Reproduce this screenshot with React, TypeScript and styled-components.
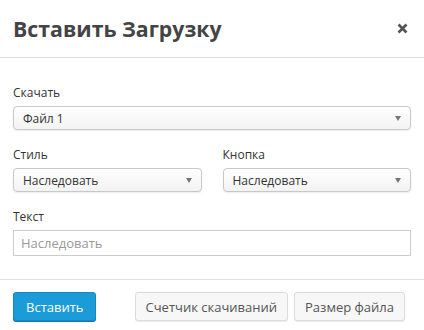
import { FC } from "react";
import styled, { createGlobalStyle } from "styled-components";

const GlobalStyle = createGlobalStyle`
  html, body {
    margin: 0;
    padding: 0;
    background: #fff;
    font-family: "Open Sans", "Liberation Sans", sans-serif;
  }
`;

const SModal = styled.div`
  width: 424px;
  height: 330px;
  background: #fff;
  overflow: hidden;
`;

const SHeader = styled.header`
  display: flex;
  align-items: center;
  justify-content: space-between;
  height: 57px;
  padding: 0 15px 0 13px;
  border-bottom: 1px solid #ddd;
`;

const STitle = styled.h1`
  margin: 0;
  font-size: 21.3px;
  font-weight: 700;
  color: #444;
`;

const SClose = styled.button`
  display: flex;
  align-items: center;
  justify-content: center;
  width: 14px;
  height: 16px;
  padding: 0;
  border: none;
  background: none;
  cursor: pointer;
`;

const SBody = styled.div`
  display: grid;
  gap: 16px;
  padding: 26px 13px 23px;
  border-bottom: 1px solid #e2e2e2;
`;

const SRow = styled.div`
  display: grid;
  grid-template-columns: 1fr 1fr;
  column-gap: 21px;
`;

const SField = styled.label`
  display: flex;
  flex-direction: column;
  gap: 4px;
`;

const SLabel = styled.span`
  font-size: 12px;
  line-height: 18px;
  color: #333;
`;

const SSelect = styled.div`
  position: relative;
  display: flex;
  align-items: center;
  height: 22px;
  padding: 0 9px;
  border: 1px solid #c8c8c8;
  border-radius: 4px;
  background: linear-gradient(#ffffff, #f3f3f3);
  box-shadow: 0 1px 2px rgba(0, 0, 0, 0.08);
  font-size: 12px;
  color: #333;
`;

const SArrow = styled.span`
  position: absolute;
  right: 9px;
  top: 9px;
  width: 0;
  height: 0;
  border-left: 3.5px solid transparent;
  border-right: 3.5px solid transparent;
  border-top: 5px solid #777;
`;

const SInput = styled.input`
  box-sizing: border-box;
  width: 100%;
  height: 26px;
  padding: 0 7px;
  border: 1px solid #ccc;
  border-radius: 0;
  font-family: inherit;
  font-size: 13px;
  color: #333;
  outline: none;
  &::placeholder {
    color: #999;
  }
`;

const SFooter = styled.footer`
  display: flex;
  align-items: center;
  justify-content: space-between;
  padding: 12px 19px 0 13px;
`;

const SButtonGroup = styled.div`
  display: flex;
  gap: 6px;
`;

const SButton = styled.button<{ $primary?: boolean }>`
  height: 29px;
  padding: 0 ${(p) => (p.$primary ? "12px" : "10px")};
  border-radius: 3px;
  font-family: inherit;
  font-size: 13px;
  cursor: pointer;
  border: 1px solid ${(p) => (p.$primary ? "#1688c0" : "#dcdcdc")};
  background: ${(p) => (p.$primary ? "#1b9cd8" : "#f7f7f7")};
  color: ${(p) => (p.$primary ? "#fff" : "#555")};
  box-shadow: ${(p) =>
    p.$primary ? "0 1px 0 #127bae" : "0 1px 1px rgba(0, 0, 0, 0.08)"};
`;

const Select: FC<{ value: string }> = ({ value }) => (
  <SSelect>
    {value}
    <SArrow />
  </SSelect>
);

const App: FC = () => (
  <>
    <GlobalStyle />
    <SModal>
      <SHeader>
        <STitle>Вставить Загрузку</STitle>
        <SClose aria-label="Закрыть">
          <svg width="11" height="11" viewBox="0 0 11 11">
            <path
              d="M1.5 1.5 L9.5 9.5 M9.5 1.5 L1.5 9.5"
              stroke="#555"
              strokeWidth="2.6"
              strokeLinecap="butt"
            />
          </svg>
        </SClose>
      </SHeader>
      <SBody>
        <SField>
          <SLabel>Скачать</SLabel>
          <Select value="Файл 1" />
        </SField>
        <SRow>
          <SField>
            <SLabel>Стиль</SLabel>
            <Select value="Наследовать" />
          </SField>
          <SField>
            <SLabel>Кнопка</SLabel>
            <Select value="Наследовать" />
          </SField>
        </SRow>
        <SField>
          <SLabel>Текст</SLabel>
          <SInput placeholder="Наследовать" />
        </SField>
      </SBody>
      <SFooter>
        <SButton $primary>Вставить</SButton>
        <SButtonGroup>
          <SButton>Счетчик скачиваний</SButton>
          <SButton>Размер файла</SButton>
        </SButtonGroup>
      </SFooter>
    </SModal>
  </>
);

export default App;
